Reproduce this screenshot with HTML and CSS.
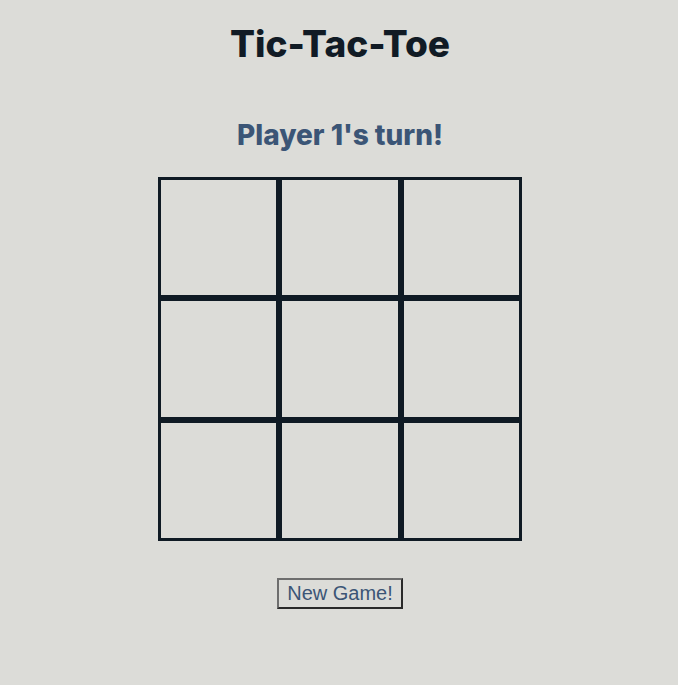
FILE: index.html
```html
<!DOCTYPE html>
<html lang="en">
<head>
<meta charset="utf-8">
<title>Tic-Tac-Toe</title>
<link rel="stylesheet" href="styles.css">
</head>
<body>
  <main class="game">
    <h1 class="title">Tic-Tac-Toe</h1>
    <h2 class="status">Player 1's turn!</h2>
    <div class="board">
      <div class="cell"></div>
      <div class="cell"></div>
      <div class="cell"></div>
      <div class="cell"></div>
      <div class="cell"></div>
      <div class="cell"></div>
      <div class="cell"></div>
      <div class="cell"></div>
      <div class="cell"></div>
    </div>
    <button class="reset" type="button">New Game!</button>
  </main>
</body>
</html>
```
FILE: styles.css
```css
html, body {
  margin: 0;
  background: #dcdcd8;
}

.game {
  display: flex;
  flex-direction: column;
  align-items: center;
  padding-left: 2px;
  font-family: Inter, "Noto Sans", sans-serif;
}

.title {
  margin: 20px 0 0;
  font-size: 37px;
  line-height: 48px;
  font-weight: 800;
  color: #111b25;
}

.status {
  margin: 47px 0 0;
  font-size: 28px;
  line-height: 40px;
  font-weight: 800;
  color: #3b5576;
}

.board {
  margin-top: 22px;
  width: 364px;
  height: 364px;
  display: grid;
  grid-template-columns: repeat(3, 1fr);
  grid-template-rows: repeat(3, 1fr);
}

.cell {
  border: 3px solid #0f1a24;
}

.reset {
  margin-top: 37px;
  padding: 2px 8px;
  font-family: "Liberation Sans", Arial, sans-serif;
  font-size: 20px;
  color: #3b5576;
  background: transparent;
  border: 2px solid;
  border-color: #6e6e6e #2a2a2a #2a2a2a #6e6e6e;
}
```
